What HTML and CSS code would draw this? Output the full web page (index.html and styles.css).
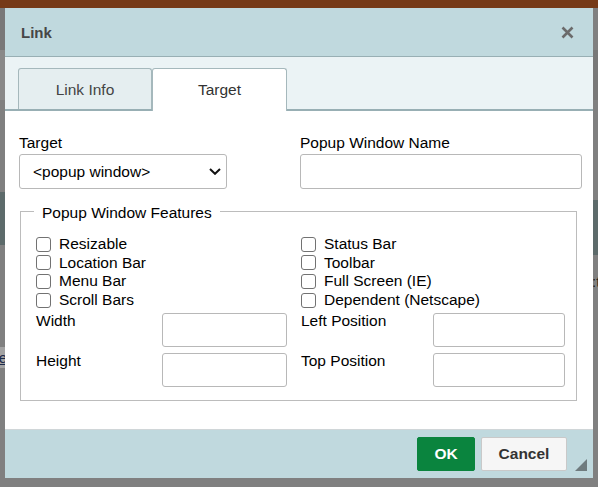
FILE: index.html
```html
<!DOCTYPE html>
<html>
<head>
<meta charset="utf-8">
<link rel="stylesheet" href="styles.css">
</head>
<body>
<div class="page">
  <div class="topbar"></div>
  <div class="main">
    <div class="strip">
      <div class="band b-dark" style="height:42px"></div>
      <div class="band b-light" style="height:50px"></div>
      <div class="band" style="height:92px"></div>
      <div class="band b-teal" style="height:53px"></div>
      <div class="band" style="height:102px"></div>
      <div class="band b-pale frag-left" style="height:21px"><span class="frag-e">e</span></div>
      <div class="band fill"></div>
    </div>
    <div class="strip">
      <div class="band" style="height:42px"></div>
      <div class="band b-dark" style="height:50px"></div>
      <div class="band" style="height:100px"></div>
      <div class="band b-teal" style="height:55px"></div>
      <div class="band" style="height:18px"></div>
      <div class="band frag-right" style="height:18px"><span class="frag-t">:t</span></div>
      <div class="band fill"></div>
    </div>
  </div>
</div>

<div class="dialog">
  <div class="dlg-header">
    <div class="dlg-title">Link</div>
    <svg class="close" width="13" height="13" viewBox="0 0 13 13">
      <path d="M1.5 1.5 L11.5 11.5 M11.5 1.5 L1.5 11.5" stroke="#6b6b6b" stroke-width="2.6" fill="none"/>
    </svg>
  </div>
  <div class="tabs">
    <div class="tab">Link Info</div>
    <div class="tab active">Target</div>
  </div>
  <div class="dlg-body">
    <div class="top-row">
      <div class="field">
        <label class="lbl">Target</label>
        <div class="select-wrap">
          <select class="select"><option>&lt;popup window&gt;</option></select>
          <svg class="chev" width="12" height="7" viewBox="0 0 12 7">
            <path d="M1 1 L6 5.8 L11 1" stroke="#111" stroke-width="2" fill="none"/>
          </svg>
        </div>
      </div>
      <div class="field">
        <label class="lbl">Popup Window Name</label>
        <input class="text wide" type="text">
      </div>
    </div>
    <fieldset class="features">
      <legend class="legend">Popup Window Features</legend>
      <div class="cols">
        <div class="col">
          <label class="check"><input type="checkbox" class="cb"><span>Resizable</span></label>
          <label class="check"><input type="checkbox" class="cb"><span>Location Bar</span></label>
          <label class="check"><input type="checkbox" class="cb"><span>Menu Bar</span></label>
          <label class="check"><input type="checkbox" class="cb"><span>Scroll Bars</span></label>
          <div class="size-row first">
            <span class="size-lbl l">Width</span>
            <input class="text sl" type="text">
          </div>
          <div class="size-row">
            <span class="size-lbl l">Height</span>
            <input class="text sl" type="text">
          </div>
        </div>
        <div class="col">
          <label class="check"><input type="checkbox" class="cb"><span>Status Bar</span></label>
          <label class="check"><input type="checkbox" class="cb"><span>Toolbar</span></label>
          <label class="check"><input type="checkbox" class="cb"><span>Full Screen (IE)</span></label>
          <label class="check"><input type="checkbox" class="cb"><span>Dependent (Netscape)</span></label>
          <div class="size-row first">
            <span class="size-lbl r">Left Position</span>
            <input class="text sr" type="text">
          </div>
          <div class="size-row">
            <span class="size-lbl r">Top Position</span>
            <input class="text sr" type="text">
          </div>
        </div>
      </div>
    </fieldset>
  </div>
  <div class="dlg-footer">
    <button class="btn ok">OK</button>
    <button class="btn cancel">Cancel</button>
    <span class="resize"></span>
  </div>
</div>
</body>
</html>
```

FILE: styles.css
```css
* { box-sizing: border-box; }

html, body {
  margin: 0;
  padding: 0;
}

body {
  width: 598px;
  height: 487px;
  overflow: hidden;
  position: relative;
  background: #808080;
  font-family: "Liberation Sans", Arial, sans-serif;
}

/* background page (behind modal overlay) */
.page {
  height: 487px;
  display: flex;
  flex-direction: column;
}

.topbar {
  height: 8px;
  background: #763a17;
}

.main {
  flex: 1;
  display: flex;
  justify-content: space-between;
}

.strip {
  width: 5px;
  display: flex;
  flex-direction: column;
}

.band { background: #808080; overflow: hidden; }
.band.fill { flex: 1; }
.b-dark { background: #787878; }
.b-light { background: #898989; }
.b-teal { background: #5d6b6b; }
.b-pale { background: #a3a3a3; }

.frag-left {
  display: flex;
  justify-content: flex-end;
  align-items: center;
}

.frag-e {
  font-size: 15px;
  color: #1c2a4a;
  text-decoration: underline;
  line-height: 18px;
  margin-right: -2px;
}

.frag-right {
  display: flex;
  align-items: center;
}

.frag-t {
  font-size: 15px;
  color: #222;
  line-height: 18px;
  margin-left: -1px;
}

/* dialog */
.dialog {
  position: absolute;
  left: 5px;
  top: 8px;
  width: 588px;
  height: 470px;
  display: flex;
  flex-direction: column;
  background: #fff;
}

.dlg-header {
  height: 49px;
  flex: none;
  background: #c0d9de;
  border-bottom: 1px solid #98afb4;
  display: flex;
  align-items: center;
  justify-content: space-between;
  padding: 0 19px 0 16px;
}

.dlg-title {
  font-size: 15px;
  font-weight: bold;
  color: #474747;
}

.close { display: block; }

.tabs {
  height: 54px;
  flex: none;
  background: #ebf3f5;
  border-bottom: 2px solid #98afb4;
  padding: 11px 0 0 13px;
  display: flex;
  align-items: flex-end;
}

.tab {
  width: 134px;
  height: 41px;
  border: 1px solid #a5b8bc;
  border-bottom: none;
  border-radius: 3px 3px 0 0;
  background: #e5eef0;
  display: flex;
  align-items: center;
  justify-content: center;
  font-size: 15.5px;
  color: #444;
  padding-top: 1px;
}

.tab.active {
  width: 135px;
  height: 43px;
  margin-bottom: -2px;
  background: #fff;
  color: #333;
  padding-bottom: 1px;
}

.dlg-body {
  flex: 1;
  padding: 23px 11px 0 14px;
}

.top-row {
  display: grid;
  grid-template-columns: 273px 282px;
  column-gap: 8px;
}

.lbl {
  display: block;
  font-size: 15.5px;
  line-height: 18px;
  color: #000;
  margin-bottom: 2px;
}

.select-wrap {
  position: relative;
  width: 208px;
  height: 35px;
}

.select {
  appearance: none;
  -webkit-appearance: none;
  width: 100%;
  height: 100%;
  border: 1px solid #b8b8b8;
  border-radius: 3px;
  background: #fff;
  font-family: "Liberation Sans", Arial, sans-serif;
  font-size: 15.5px;
  color: #000;
  padding: 0 0 0 13px;
  margin: 0;
}

.chev {
  position: absolute;
  right: 6px;
  top: 14px;
  pointer-events: none;
}

.text {
  display: block;
  height: 35px;
  border: 1px solid #b8b8b8;
  border-radius: 3px;
  background: #fff;
  margin: 0;
  padding: 0 6px;
  font-family: "Liberation Sans", Arial, sans-serif;
  font-size: 15.5px;
}

.text.wide { width: 282px; }

.features {
  margin: 11px 5px 0 1px;
  border: 1px solid #bcbcbc;
  padding: 13px 11px 13px 15px;
  min-width: 0;
}

.legend {
  padding: 4px 8px 0 8px;
  margin-left: -2px;
  font-size: 15.5px;
  line-height: 18px;
  color: #000;
}

.cols {
  display: grid;
  grid-template-columns: 265px 264px;
}

.check {
  display: flex;
  align-items: center;
  gap: 8px;
  height: 18.6px;
  font-size: 15.5px;
  color: #000;
}

.cb {
  appearance: none;
  -webkit-appearance: none;
  width: 15px;
  height: 15px;
  margin: 0;
  border: 1px solid #727272;
  border-radius: 3px;
  background: #fff;
  flex: none;
}

.size-row {
  display: flex;
  align-items: flex-start;
  margin-top: 6px;
}

.size-row.first { margin-top: 3.6px; }

.size-lbl {
  font-size: 15.5px;
  line-height: 18px;
  color: #000;
  margin-top: -1px;
}

.size-lbl.l { width: 126px; }
.size-lbl.r { width: 132px; }

.text.sl { width: 125px; height: 34px; }
.text.sr { width: 132px; height: 34px; }

.dlg-footer {
  height: 49px;
  flex: none;
  background: #c0d9de;
  border-top: 1px solid #d0d6d8;
  display: flex;
  align-items: center;
  justify-content: flex-end;
  gap: 6px;
  padding-right: 26px;
  position: relative;
}

.btn {
  height: 34px;
  border-radius: 2px;
  font-family: "Liberation Sans", Arial, sans-serif;
  font-size: 15.5px;
  font-weight: bold;
  margin: 0;
  padding: 0;
}

.btn.ok {
  width: 58px;
  background: #0a843e;
  border: 1px solid #0a843e;
  color: #fff;
}

.btn.cancel {
  width: 86px;
  background: #f6f6f6;
  border: 1px solid #c9c9c9;
  color: #333;
}

.resize {
  position: absolute;
  right: 6px;
  bottom: 7px;
  width: 0;
  height: 0;
  border-style: solid;
  border-width: 0 0 12px 12px;
  border-color: transparent transparent #6f7b7e transparent;
}
```
